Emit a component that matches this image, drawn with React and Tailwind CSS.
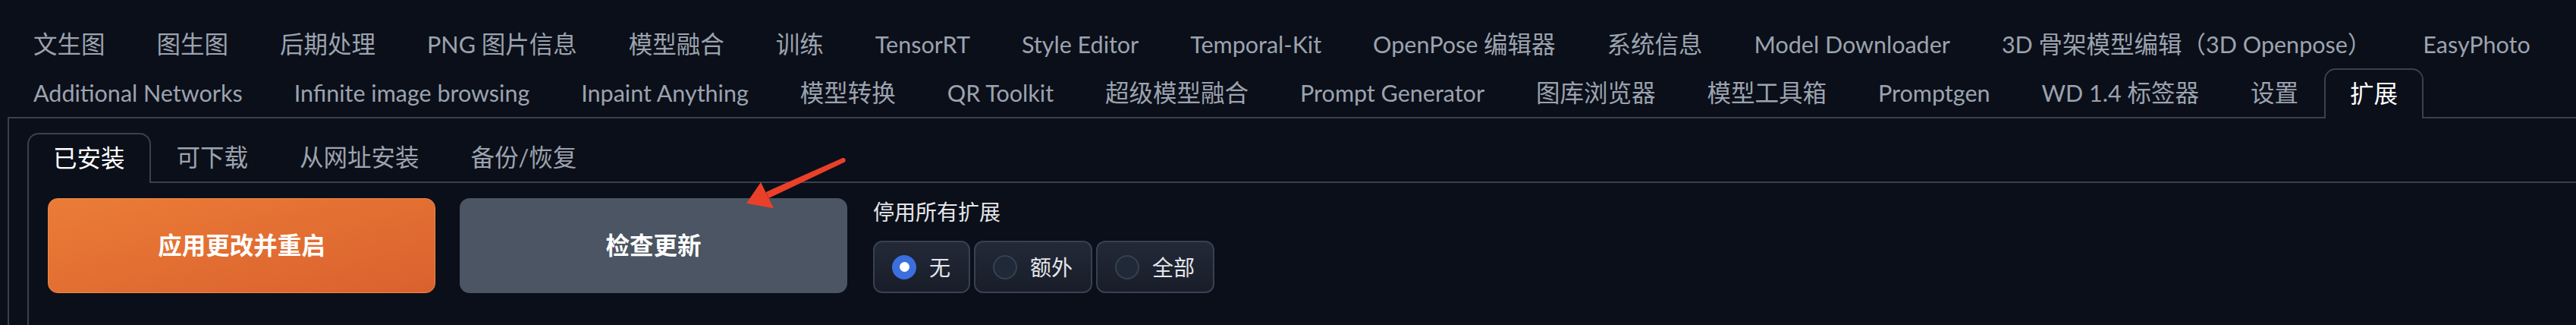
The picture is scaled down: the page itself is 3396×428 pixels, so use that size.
import React from "react";

const row1 = [
  "文生图",
  "图生图",
  "后期处理",
  "PNG 图片信息",
  "模型融合",
  "训练",
  "TensorRT",
  "Style Editor",
  "Temporal-Kit",
  "OpenPose 编辑器",
  "系统信息",
  "Model Downloader",
  "3D 骨架模型编辑（3D Openpose）",
  "EasyPhoto",
];

const row2 = [
  "Additional Networks",
  "Infinite image browsing",
  "Inpaint Anything",
  "模型转换",
  "QR Toolkit",
  "超级模型融合",
  "Prompt Generator",
  "图库浏览器",
  "模型工具箱",
  "Promptgen",
  "WD 1.4 标签器",
  "设置",
];

const subTabs = ["已安装", "可下载", "从网址安装", "备份/恢复"];

function Label({ text }) {
  const parts = text.split(/([\u3000-\u9fff\uff00-\uffef]+)/).filter(Boolean);
  return (
    <span>
      {parts.map((p, i) =>
        /[\u3000-\u9fff\uff00-\uffef]/.test(p) ? (
          <span key={i}>{p}</span>
        ) : (
          <span key={i} className="text-[30.5px]">
            {p}
          </span>
        )
      )}
    </span>
  );
}

function Tab({ label, active }) {
  if (active) {
    return (
      <button className="relative z-10 -mb-[2px] flex h-[66px] items-center whitespace-pre rounded-t-[15px] border-2 border-b-0 border-[#374151] bg-[#0b0f19] px-[32px] text-white">
        <Label text={label} />
      </button>
    );
  }
  return (
    <button className="flex h-[64px] items-center whitespace-pre border-2 border-b-0 border-transparent px-[32px] text-[#9ca3af]">
      <Label text={label} />
    </button>
  );
}

function Radio({ label, checked }) {
  return (
    <label className="flex h-[69px] items-center rounded-[12px] border-2 border-[#374151] bg-linear-to-b from-[#232937] to-[#181d29] pl-[23px] pr-[24px]">
      {checked ? (
        <span className="flex h-[32px] w-[32px] items-center justify-center rounded-full bg-[#3b6fe0]">
          <span className="h-[13px] w-[13px] rounded-full bg-white" />
        </span>
      ) : (
        <span className="h-[32px] w-[32px] rounded-full border-2 border-[#374151] bg-[#1f2937]" />
      )}
      <span className="ml-[17px] text-[28px] text-[#e5e7eb]">{label}</span>
    </label>
  );
}

export default function App() {
  return (
    <div className="relative h-[428px] w-[3396px] overflow-hidden bg-[#0b0f19] pt-[26px] font-['Lato','Noto_Sans_CJK_SC',sans-serif] text-[31.5px] leading-none">
      <div className="ml-[10px]">
        <div className="flex">
          {row1.map((t) => (
            <Tab key={t} label={t} />
          ))}
        </div>
        <div className="flex items-end border-b-2 border-[#374151]">
          {row2.map((t) => (
            <Tab key={t} label={t} />
          ))}
          <Tab label="扩展" active />
        </div>

        <div className="h-[300px] border-l-2 border-[#374151] pl-[24px] pt-[19px]">
          <div className="flex items-end border-b-2 border-[#374151]">
            {subTabs.map((t, i) => (
              <Tab key={t} label={t} active={i === 0} />
            ))}
          </div>

          <div className="h-[200px] border-l-2 border-[#374151] pl-[25px] pt-[20px]">
            <div className="flex items-start gap-[32px]">
              <button className="flex h-[125px] w-[511px] items-center justify-center rounded-[13px] border border-[#ef8a4a] bg-linear-to-br from-[#eb7c37] to-[#da612e] font-bold text-white">
                应用更改并重启
              </button>
              <button className="flex h-[125px] w-[511px] items-center justify-center rounded-[13px] bg-[#4b5563] font-bold text-white">
                检查更新
              </button>
              <div className="ml-[2px] flex flex-col">
                <span className="text-[28px] leading-[36px] text-[#e5e7eb]">停用所有扩展</span>
                <div className="mt-[20px] flex gap-[5px]">
                  <Radio label="无" checked />
                  <Radio label="额外" />
                  <Radio label="全部" />
                </div>
              </div>
            </div>
          </div>
        </div>
      </div>

      <svg
        className="pointer-events-none absolute left-[975px] top-[200px]"
        width="145"
        height="85"
        viewBox="0 0 145 85"
      >
        <polygon points="135.4,8.3 138,13.7 38.4,61.1 34.6,52.9" fill="#ea4029" />
        <circle cx="136.7" cy="11" r="3" fill="#ea4029" />
        <polygon points="9,67.7 28,40 45,74.3" fill="#ea4029" />
      </svg>
    </div>
  );
}
